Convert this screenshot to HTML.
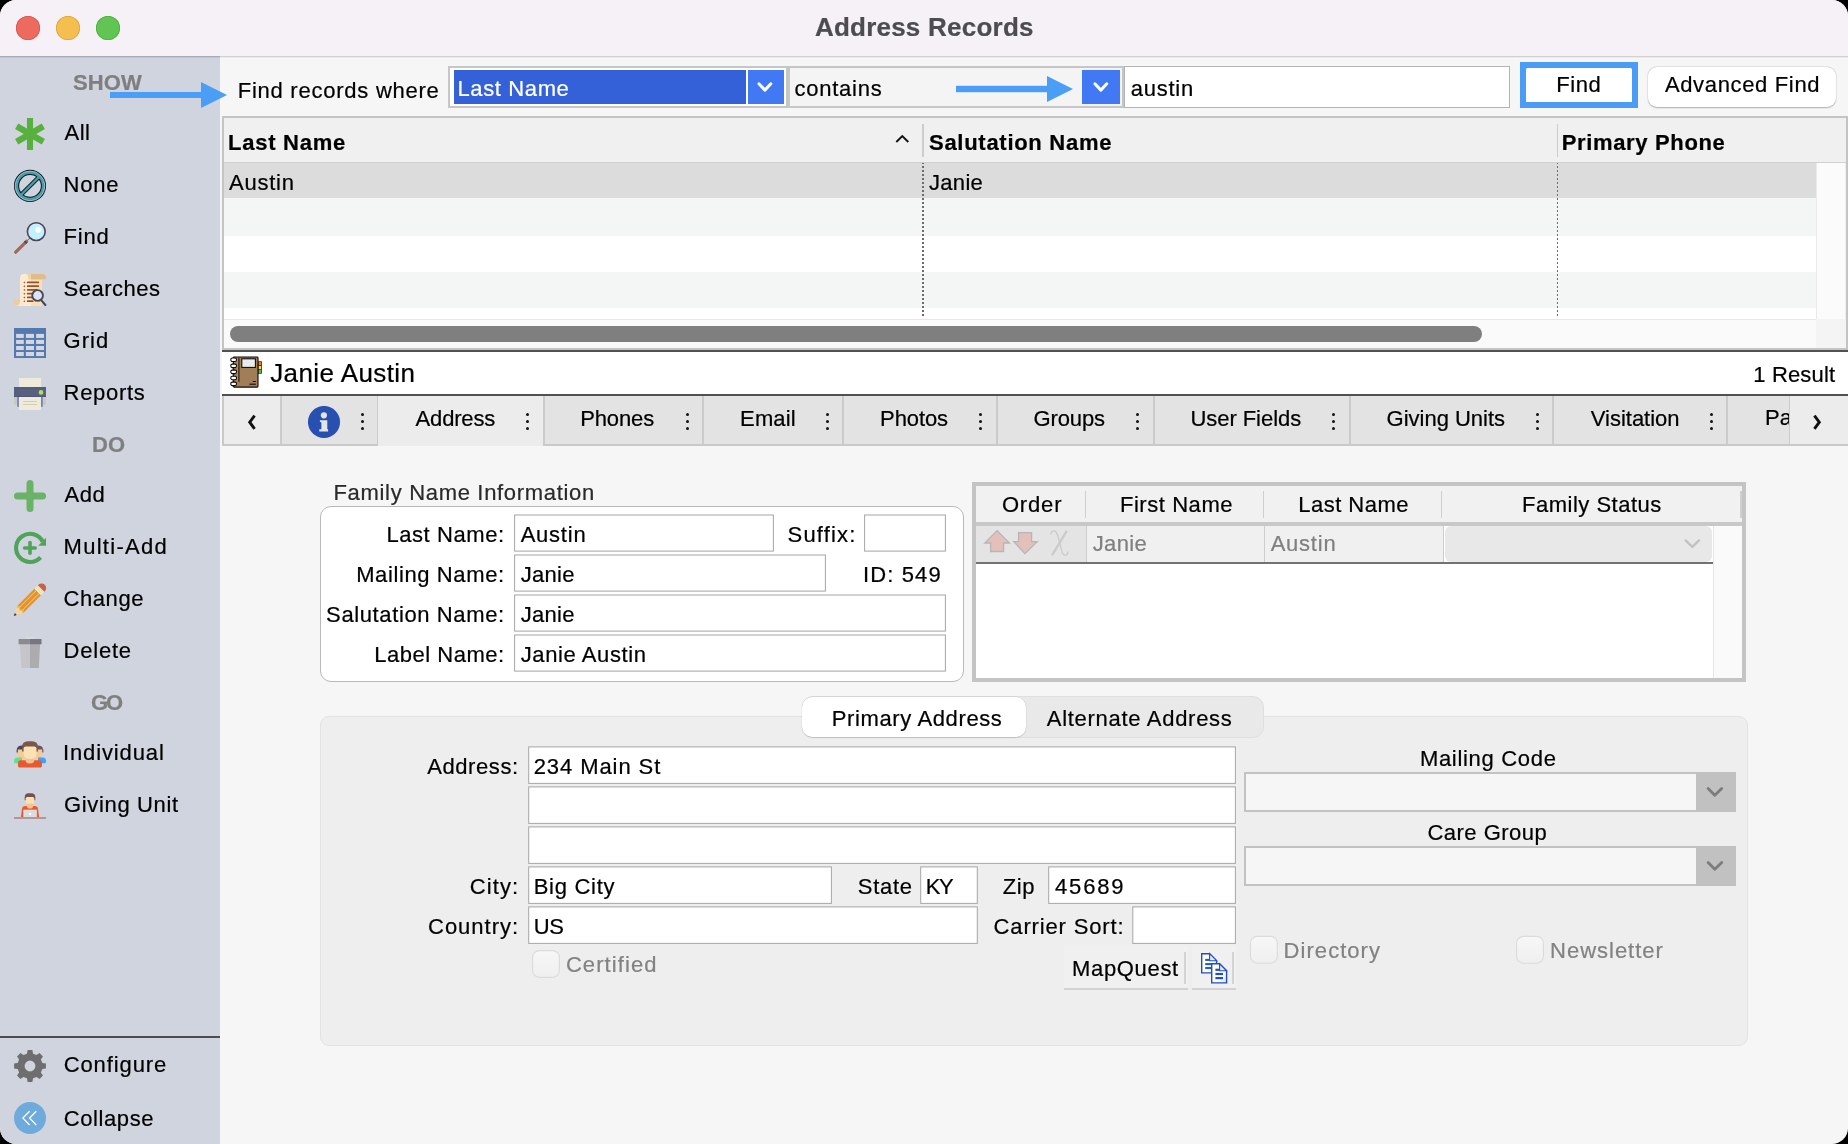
<!DOCTYPE html>
<html><head><meta charset="utf-8"><title>Address Records</title>
<style>
*{box-sizing:border-box;margin:0;padding:0}
html,body{width:1848px;height:1144px;overflow:hidden;background:#000;font-family:"Liberation Sans",sans-serif;color:#000}
#win{position:absolute;left:0;top:0;width:1848px;height:1144px;border-radius:16px;overflow:hidden;background:#f6f6f6}
.a{position:absolute}
.t{position:absolute;white-space:nowrap;line-height:1;font-family:"Liberation Sans",sans-serif;-webkit-text-stroke:.22px}
.tl{position:absolute;top:16px;width:24px;height:24px;border-radius:50%}
.ic{position:absolute;left:14px;width:32px;overflow:visible}
.in{position:absolute;background:#fff;border:1px solid #ababab}
.cb{position:absolute;width:27px;height:27px;border-radius:6.5px;background:linear-gradient(#f6f6f6,#efefef);border:1px solid #e0e0e0}
.vd{position:absolute;width:2px;background:#cbcbcb}
.dots{position:absolute;width:3px}
.dots i{position:absolute;left:0;width:3.2px;height:3.2px;background:#111;border-radius:50%}
</style></head><body>
<div id="win">
<div class="a" style="left:0px;top:0px;width:1848px;height:56px;background:#f6f0f7"></div>
<div class="a" style="left:0px;top:56px;width:220px;height:1px;background:#a6abb7"></div>
<div class="a" style="left:220px;top:56px;width:1628px;height:1px;background:#d1d1d1"></div>
<div class="tl" style="left:16px;background:#ed6a5e;box-shadow:inset 0 0 0 .8px #d5574c"></div>
<div class="tl" style="left:56px;background:#f5bf4f;box-shadow:inset 0 0 0 .8px #d9a63c"></div>
<div class="tl" style="left:96px;background:#61c554;box-shadow:inset 0 0 0 .8px #4eac41"></div>
<div class="a" style="left:0px;top:57px;width:220px;height:1087px;background:#d0d4de"></div>
<svg class="ic" style="top:118px;height:32px" viewBox="0 0 32 32"><g fill="#58b13e"><rect x="12.95" y="0" width="6.1" height="32"/><rect x="12.8" y="0.6" width="6.4" height="30.8" transform="rotate(60 16 16)"/><rect x="12.8" y="0.6" width="6.4" height="30.8" transform="rotate(120 16 16)"/></g></svg>
<svg class="ic" style="top:170px;height:32px" viewBox="0 0 32 32"><circle cx="16" cy="15.9" r="13.45" fill="none" stroke="#10181c" stroke-width="5.2"/><line x1="6.8" y1="25.1" x2="25.2" y2="6.7" stroke="#10181c" stroke-width="4.3"/><circle cx="16" cy="15.9" r="13.35" fill="none" stroke="#4a9aa9" stroke-width="3.0"/><circle cx="16" cy="15.9" r="14.85" fill="none" stroke="#b4eaee" stroke-width=".7"/><line x1="7" y1="24.9" x2="25" y2="6.9" stroke="#4a9aa9" stroke-width="2.3"/></svg>
<svg class="ic" style="top:222px;height:32px" viewBox="0 0 32 32"><line x1="12.8" y1="19.1" x2="16" y2="15.9" stroke="#6a6478" stroke-width="1"/><line x1="1.7" y1="30.2" x2="12.6" y2="19.3" stroke="#a2695a" stroke-width="3.3" stroke-linecap="round"/><line x1="11" y1="20.9" x2="12.3" y2="19.6" stroke="#4d4656" stroke-width="3.3"/><circle cx="22.27" cy="9.6" r="8.9" fill="#c4f0fb" stroke="#4a4458" stroke-width="1.6"/><circle cx="24.2" cy="7.85" r="2.9" fill="#fff" filter="url(#blr)"/><defs><filter id="blr" x="-50%" y="-50%" width="200%" height="200%"><feGaussianBlur stdDeviation=".45"/></filter></defs></svg>
<svg class="ic" style="top:274px;height:32px" viewBox="0 0 32 32"><path d="M6,4.4 Q6,0 10.4,0 L29,0 Q32,0.4 32,3.6 L32,5.6 L28,5.6 L28,32 L3.4,32 Q0,32 0,28.6 L0,25 L6,25Z" fill="#fcebd0"/><path d="M17,5.6 L28,5.6 L28,32 L17,32Z" fill="#fbdfb3"/><path d="M12.8,0 L29,0 Q32,0.4 32,3.6 L32,5.6 L14.4,5.6 Q14.6,2 12.8,0Z" fill="#f1d2a6"/><path d="M17,0 L29,0 Q32,0.4 32,3.6 L32,5.6 L17,5.6Z" fill="#dfbd8b"/><path d="M0,25 L6,25 L6,27.6 Q5.6,31.6 2.6,32 Q0,31.6 0,28.6Z" fill="#edcc9f"/><g stroke="#95502f" stroke-width="1.9" stroke-linecap="round"><line x1="13.8" y1="8.4" x2="24.199999999999996" y2="8.4"/><line x1="13.8" y1="12.15" x2="24.199999999999996" y2="12.15"/><line x1="13.8" y1="15.9" x2="22.599999999999998" y2="15.9"/><line x1="13.8" y1="19.65" x2="18.599999999999998" y2="19.65"/><line x1="13.8" y1="23.4" x2="17.599999999999998" y2="23.4"/><line x1="13.8" y1="27.15" x2="18.599999999999998" y2="27.15"/></g><g fill="#a15a36"><path d="M9.35,8.4 L10.35,7.4 L11.35,8.4 L10.35,9.4Z"/><path d="M9.35,12.15 L10.35,11.15 L11.35,12.15 L10.35,13.15Z"/><path d="M9.35,15.9 L10.35,14.9 L11.35,15.9 L10.35,16.9Z"/><path d="M9.35,19.65 L10.35,18.65 L11.35,19.65 L10.35,20.65Z"/><path d="M9.35,23.4 L10.35,22.4 L11.35,23.4 L10.35,24.4Z"/><path d="M9.35,27.15 L10.35,26.15 L11.35,27.15 L10.35,28.15Z"/></g><line x1="27.6" y1="26.6" x2="31.4" y2="31" stroke="#454a56" stroke-width="2.1" stroke-linecap="round"/><circle cx="23.6" cy="21.5" r="5.35" fill="#dfe4f4" stroke="#454a56" stroke-width="1.9"/></svg>
<svg class="ic" style="top:328px;height:30px" viewBox="0 0 32 30"><rect x="0" y="0" width="32" height="30" fill="#5479ae"/><rect x="2.1" y="5.9" width="7.7" height="4.05" fill="#d3d7e0"/><rect x="11.9" y="5.9" width="8.1" height="4.05" fill="#d3d7e0"/><rect x="22.1" y="5.9" width="7.9" height="4.05" fill="#d3d7e0"/><rect x="2.1" y="11.9" width="7.7" height="4.05" fill="#d3d7e0"/><rect x="11.9" y="11.9" width="8.1" height="4.05" fill="#d3d7e0"/><rect x="22.1" y="11.9" width="7.9" height="4.05" fill="#d3d7e0"/><rect x="2.1" y="18" width="7.7" height="4.05" fill="#d3d7e0"/><rect x="11.9" y="18" width="8.1" height="4.05" fill="#d3d7e0"/><rect x="22.1" y="18" width="7.9" height="4.05" fill="#d3d7e0"/><rect x="2.1" y="24" width="7.7" height="4.05" fill="#d3d7e0"/><rect x="11.9" y="24" width="8.1" height="4.05" fill="#d3d7e0"/><rect x="22.1" y="24" width="7.9" height="4.05" fill="#d3d7e0"/></svg>
<svg class="ic" style="top:378px;height:32px" viewBox="0 0 32 32"><rect x="4.9" y="0" width="22.1" height="10" fill="#eeebdc"/><rect x="0" y="17" width="3.6" height="9.6" fill="#c9c9c4"/><rect x="28.4" y="17" width="3.6" height="9.6" fill="#c9c9c4"/><rect x="3.2" y="17" width="1.8" height="12" rx=".8" fill="#7480bc"/><rect x="27" y="17" width="1.8" height="12" rx=".8" fill="#7480bc"/><rect x="4.9" y="17" width="22.1" height="15" fill="#eeebdc"/><rect x="0" y="9.2" width="32" height="9.8" fill="#57607f"/><rect x="0" y="9.2" width="32" height="1" fill="#4f5678"/><rect x="0" y="18" width="32" height="1" fill="#4f5678"/><circle cx="27" cy="14.4" r="2.3" fill="#a4e266"/><rect x="9" y="23" width="14" height="1" fill="#d3cfae"/><rect x="9" y="26" width="14" height="1" fill="#d3cfae"/></svg>
<svg class="ic" style="top:480px;height:32px" viewBox="0 0 32 32"><g stroke="#6ab265" stroke-width="7" stroke-linecap="round"><line x1="3.5" y1="16" x2="28.5" y2="16"/><line x1="16" y1="3.5" x2="16" y2="28.5"/></g></svg>
<svg class="ic" style="top:532px;height:32px" viewBox="0 0 32 32"><path d="M26.54,25.30 A14.05,14.05 0 1 1 28.62,9.52" fill="none" stroke="#4fa35a" stroke-width="4.1"/><path d="M24.2,13.7 L32.1,13.8 L31.9,5.8Z" fill="#4fa35a"/><g stroke="#4fa35a" stroke-width="3.6" stroke-linecap="round"><line x1="10.6" y1="16" x2="21.2" y2="16"/><line x1="16" y1="10.6" x2="16" y2="21.2"/></g></svg>
<svg class="ic" style="top:584px;height:32px" viewBox="0 0 32 32"><g transform="rotate(-45 16 16)">
<path d="M-6.7,15.8 L2.6,11.2 L2.6,20.4Z" fill="#f8d3a4"/>
<path d="M-6.7,15.8 L-3.9,14.4 L-3.9,17.2Z" fill="#2f3440"/>
<rect x="2.4" y="11.2" width="25" height="9.2" fill="#e88f2e"/>
<rect x="2.4" y="13.3" width="25" height="1.1" fill="#ebcb55"/>
<rect x="2.4" y="17.2" width="25" height="1.1" fill="#ebcb55"/>
<rect x="2.4" y="14.4" width="25" height="2.8" fill="#e2913a"/>
<path d="M1.2,11.9 L2.6,11.2 L4.6,13.3 L2.4,15.8 L4.6,18.3 L2.6,20.4 L1.2,19.7 L2.6,17.6 L1,15.8 L2.6,14Z" fill="#e9c24a"/>
<rect x="27.2" y="11.2" width="4.7" height="9.2" fill="#f7f0bd"/>
<rect x="28.5" y="11.2" width="0.8" height="9.2" fill="#d8d6c6"/><rect x="30.3" y="11.2" width="0.8" height="9.2" fill="#d8d6c6"/>
<path d="M31.9,11.2 L32.6,11.2 A4.6,4.6 0 0 1 32.6,20.4 L31.9,20.4Z" fill="#c9604e"/></g></svg>
<svg class="ic" style="top:638px;height:32px" viewBox="0 0 32 32"><rect x="11.7" y="-1.4" width="8.8" height="2.6" rx="1" fill="#d9d9dc" opacity=".8"/><path d="M5.9,6 L15.9,6 L15.9,29.9 L7.3,29.9Z" fill="#c6c5ca"/><path d="M15.9,6 L26.1,6 L24.8,29.9 L15.9,29.9Z" fill="#acabb0"/><path d="M4.6,1.6 Q4.6,1 5.2,1 L15.9,1 L15.9,6.3 L5.2,6.3 Q4.6,6.3 4.6,5.7Z" fill="#8b8a90"/><path d="M15.9,1 L26.9,1 Q27.5,1 27.5,1.6 L27.5,5.7 Q27.5,6.3 26.9,6.3 L15.9,6.3Z" fill="#77757f"/></svg>
<svg class="ic" style="top:740.6px;height:32px" viewBox="0 0 32 32"><g>
<path d="M2.6,11.6 Q2.2,4.4 7.2,4.4 L11,4.4 L11,11.6Z" fill="#474565"/>
<path d="M3.8,8.4 L10.6,8.4 L10.6,18.4 L7,18.4 Q3.8,17.4 3.8,13Z" fill="#f5cb94"/>
<path d="M0,20.4 Q0,16.4 3.4,16.4 L8,16.4 L8,22.2 L1.4,22.2 Q0,22.2 0,20.8Z" fill="#62df90"/>
<path d="M29.4,11.6 Q29.8,4.4 24.8,4.4 L21,4.4 L21,11.6Z" fill="#6e5560"/>
<path d="M28.2,8.4 L21.4,8.4 L21.4,18.4 L25,18.4 Q28.2,17.4 28.2,13Z" fill="#f5cb94"/>
<path d="M32.1,20.4 Q32.1,16.4 28.7,16.4 L24,16.4 L24,22.2 L30.7,22.2 Q32.1,22.2 32.1,20.8Z" fill="#44a0f5"/>
<path d="M4,25 L4,22 Q4,19.3 7,19.3 L25,19.3 Q28,19.3 28,22 L28,25 Q28,26.4 26.6,26.4 L5.4,26.4 Q4,26.4 4,25Z" fill="#e9592f"/>
<path d="M11.5,16 L20.3,16 L20.3,19 Q20.3,22.5 15.9,22.5 Q11.5,22.5 11.5,19Z" fill="#f5c08c"/>
<path d="M8,10.4 L8,6.6 Q8,0.2 14,0.2 L18,0.2 Q24,0.2 24,6.6 L24,10.4Z" fill="#7a574b"/>
<path d="M9.6,7.6 Q9.6,5.4 12,5.4 L20,5.4 Q22.5,5.4 22.5,7.6 L22.5,12.4 Q22.5,18 16,18 Q9.6,18 9.6,12.4Z" fill="#fbe2b4"/>
</g></svg>
<svg class="ic" style="top:793px;height:32px" viewBox="0 0 32 32"><path d="M10.7,7.2 L10.7,4.2 Q10.7,0.2 14.6,0.2 L17.4,0.2 Q21.3,0.2 21.3,4.2 L21.3,7.2Z" fill="#76504a"/>
<path d="M11.7,5.6 Q11.7,4.1 13.4,4.1 L18.6,4.1 Q20.3,4.1 20.3,5.6 L20.3,8 Q20.3,11.9 16,11.9 Q11.7,11.9 11.7,8Z" fill="#fbe2b4"/>
<path d="M6.9,24.2 L8,15.8 Q8.3,12.9 11.2,12.9 L20.8,12.9 Q23.7,12.9 24,15.8 L25.2,24.2Z" fill="#ea5a2c"/>
<path d="M13,10.6 L19,10.6 L19,13 Q19,15.6 16,15.6 Q13,15.6 13,13Z" fill="#f6c58f"/>
<rect x="9.8" y="17.1" width="12.5" height="7.2" fill="#d9dce2" stroke="#e3ebf3" stroke-width=".7"/>
<rect x="15" y="20" width="2.1" height="2" rx=".4" fill="#fff"/>
<rect x="0" y="24.1" width="32.1" height="1.75" fill="#b08d8a"/></svg>
<svg class="ic" style="top:1050px;height:32px" viewBox="0 0 32 32"><path fill-rule="evenodd" fill="#6e6e6e" d="M12.94,3.67 L13.61,0.08 L18.39,0.08 L19.06,3.67 L22.55,5.12 L25.57,3.05 L28.95,6.43 L26.88,9.45 L28.33,12.94 L31.92,13.61 L31.92,18.39 L28.33,19.06 L26.88,22.55 L28.95,25.57 L25.57,28.95 L22.55,26.88 L19.06,28.33 L18.39,31.92 L13.61,31.92 L12.94,28.33 L9.45,26.88 L6.43,28.95 L3.05,25.57 L5.12,22.55 L3.67,19.06 L0.08,18.39 L0.08,13.61 L3.67,12.94 L5.12,9.45 L3.05,6.43 L6.43,3.05 L9.45,5.12Z M10.6,16 a5.4,5.4 0 1,0 10.8,0 a5.4,5.4 0 1,0 -10.8,0Z"/></svg>
<svg class="ic" style="top:1102px;height:32px" viewBox="0 0 32 32"><circle cx="16" cy="16" r="16" fill="#6eaadc"/><g fill="none" stroke="#fff" stroke-width="1.3"><polyline points="22.3,9.2 15.6,16.1 22.3,23"/><polyline points="15.6,9.2 8.9,16.1 15.6,23"/></g></svg>
<div class="a" style="left:0px;top:1036px;width:220px;height:2px;background:#4c4c4e"></div>
<div class="a" style="left:220px;top:57px;width:1628px;height:1px;background:#ebebeb"></div>
<div class="a" style="left:0px;top:57px;width:220px;height:1px;background:#bfc4cf"></div>
<div class="a" style="left:448px;top:66px;width:676px;height:42px;background:#fff;border:2px solid #c6c6c6"></div>
<div class="a" style="left:454px;top:70px;width:292px;height:34px;background:#3461d8"></div>
<div class="a" style="left:748px;top:70px;width:36px;height:34px;background:#4079f3"></div>
<svg class="a" style="left:748px;top:70px" width="36" height="34"><polyline points="10.95,13.8 16.9,20.1 22.85,13.8" fill="none" stroke="#fff" stroke-width="3" stroke-linecap="round" stroke-linejoin="round"/></svg>
<div class="a" style="left:786px;top:68px;width:336px;height:38px;background:#f4f4f4"></div>
<div class="a" style="left:786.2px;top:68px;width:3.7px;height:38px;background:#c6c6c6"></div>
<div class="a" style="left:1082px;top:70px;width:38px;height:34px;background:#4079f3"></div>
<svg class="a" style="left:1082px;top:70px" width="38" height="34"><polyline points="12.9,13.8 18.85,20.1 24.8,13.8" fill="none" stroke="#fff" stroke-width="3" stroke-linecap="round" stroke-linejoin="round"/></svg>
<div class="a" style="left:1124px;top:66px;width:386px;height:42px;background:#fff;border:1.5px solid #b4b4b4"></div>
<div class="a" style="left:1520px;top:62px;width:118px;height:46px;background:#4a9cf5"></div>
<div class="a" style="left:1526px;top:68px;width:106px;height:34px;background:#fff;border-radius:1.5px 1.5px 0 0"></div>
<div class="a" style="left:1648px;top:67px;width:188px;height:40px;background:#fff;border-radius:9px;box-shadow:0 0.5px 1.5px rgba(0,0,0,.28),0 0 0 .5px rgba(0,0,0,.06)"></div>
<svg class="a" style="left:0;top:57px" width="1848" height="70"><g fill="#4a9ef5"><rect x="110" y="35" width="92" height="6"/><polygon points="201,25 227,38 201,51"/><rect x="956" y="28.8" width="92" height="6.4"/><polygon points="1047,19 1073,32 1047,45"/></g></svg>
<div class="a" style="left:222px;top:116px;width:1626px;height:233.5px;background:#fff;border:2px solid #c4c4c4"></div>
<div class="a" style="left:224px;top:118px;width:1622px;height:44.5px;background:#f0f0f0"></div>
<div class="a" style="left:224px;top:162px;width:1622px;height:1px;background:#d0d0d0"></div>
<div class="a" style="left:224px;top:162.5px;width:1592px;height:35.5px;background:#dcdcdc"></div>
<div class="a" style="left:224px;top:198px;width:1592px;height:38px;background:#f4f5f5"></div>
<div class="a" style="left:224px;top:236px;width:1592px;height:36px;background:#fff"></div>
<div class="a" style="left:224px;top:272px;width:1592px;height:36px;background:#f4f5f5"></div>
<div class="a" style="left:224px;top:308px;width:1592px;height:10.5px;background:#fff"></div>
<div class="a" style="left:1816px;top:163px;width:30px;height:184.5px;background:#fbfbfb;border-left:1px solid #e9e9e9;border-right:1px solid #f0f0f0"></div>
<div class="a" style="left:224px;top:318.5px;width:1592px;height:29px;background:#fafafa;border-top:1px solid #e8e8e8"></div>
<div class="a" style="left:1816px;top:318.5px;width:30px;height:29px;background:#f4f4f4"></div>
<div class="a" style="left:229.5px;top:325.5px;width:1252.5px;height:16.5px;background:#7f7f7f;border-radius:8.5px"></div>
<div class="a" style="left:922.4px;top:124px;width:1.6px;height:33px;background:#cdcdcd"></div>
<div class="a" style="left:1556.6px;top:124px;width:1.6px;height:33px;background:#cdcdcd"></div>
<svg class="a" style="left:890px;top:130px" width="24" height="18"><polyline points="6.3,12 12.3,6 18.3,12" fill="none" stroke="#111" stroke-width="1.9"/></svg>
<div class="a" style="left:922.3px;top:163px;width:1.7px;height:153px;background:repeating-linear-gradient(#6c6c6c 0,#6c6c6c .7px,transparent .7px,transparent 2.7px,#6c6c6c 2.7px,#6c6c6c 4px)"></div>
<div class="a" style="left:1556.5px;top:163px;width:1.7px;height:153px;background:repeating-linear-gradient(#6c6c6c 0,#6c6c6c .7px,transparent .7px,transparent 2.7px,#6c6c6c 2.7px,#6c6c6c 4px)"></div>
<div class="a" style="left:222px;top:350px;width:1626px;height:2px;background:#515151"></div>
<div class="a" style="left:222px;top:352px;width:1626px;height:42px;background:#fff"></div>
<div class="a" style="left:222px;top:394px;width:1626px;height:2px;background:#515151"></div>
<svg class="a" style="left:230px;top:356px;overflow:visible" width="32" height="32" viewBox="0 0 32 32">
<rect x="28" y="5.3" width="3.8" height="12.4" fill="#1a140e"/>
<rect x="28.4" y="5.9" width="2.7" height="3.3" fill="#f07830"/><rect x="28.4" y="9.9" width="2.7" height="3.3" fill="#f8d850"/><rect x="28.4" y="13.9" width="2.7" height="3.2" fill="#58b860"/>
<rect x="3.3" y="1" width="24.7" height="30.1" rx="0.8" fill="#a17e57" stroke="#0c0a08" stroke-width="1.1"/>
<rect x="7" y="1.8" width="1.2" height="24" fill="#b08c60"/>
<rect x="8.2" y="1.6" width="1.4" height="24.2" fill="#3a2a18"/>
<rect x="11.8" y="2.8" width="13.6" height="8.6" fill="#e8ecef" stroke="#0c0a08" stroke-width="1.05"/>
<rect x="22.8" y="25" width="3.1" height="1" fill="#0c0a08"/><rect x="19.4" y="27.6" width="6.5" height="1.2" fill="#1a140e"/>
<rect x="0.8" y="2.05" width="5.7" height="3.5" rx="1.5" fill="#fff" stroke="#0c0a08" stroke-width="1.05"/><rect x="0.8" y="8.1" width="5.7" height="3.5" rx="1.5" fill="#fff" stroke="#0c0a08" stroke-width="1.05"/><rect x="0.8" y="14.1" width="5.7" height="3.5" rx="1.5" fill="#fff" stroke="#0c0a08" stroke-width="1.05"/><rect x="0.8" y="20.15" width="5.7" height="3.5" rx="1.5" fill="#fff" stroke="#0c0a08" stroke-width="1.05"/><rect x="0.8" y="26.1" width="5.7" height="3.5" rx="1.5" fill="#fff" stroke="#0c0a08" stroke-width="1.05"/></svg>
<div class="a" style="left:222px;top:396px;width:1626px;height:48.5px;background:#e3e3e3"></div>
<div class="a" style="left:222px;top:444.2px;width:1626px;height:1.8px;background:#c9c9c9"></div>
<div class="a" style="left:222px;top:396px;width:2px;height:48.5px;background:#c9c9c9"></div>
<div class="a" style="left:224px;top:396px;width:57px;height:48.2px;background:#ececec"></div>
<div class="a" style="left:1790px;top:396px;width:58px;height:48.2px;background:#ececec"></div>
<div class="a" style="left:378.4px;top:396px;width:165px;height:50px;background:#ececec"></div>
<div class="a" style="left:280.2px;top:396px;width:1.8px;height:48.2px;background:#cbcbcb"></div>
<div class="a" style="left:376.7px;top:396px;width:1.8px;height:48.2px;background:#cbcbcb"></div>
<div class="a" style="left:543.2px;top:396px;width:1.8px;height:48.2px;background:#cbcbcb"></div>
<div class="a" style="left:702px;top:396px;width:1.8px;height:48.2px;background:#cbcbcb"></div>
<div class="a" style="left:842.2px;top:396px;width:1.8px;height:48.2px;background:#cbcbcb"></div>
<div class="a" style="left:996.2px;top:396px;width:1.8px;height:48.2px;background:#cbcbcb"></div>
<div class="a" style="left:1153.2px;top:396px;width:1.8px;height:48.2px;background:#cbcbcb"></div>
<div class="a" style="left:1349.2px;top:396px;width:1.8px;height:48.2px;background:#cbcbcb"></div>
<div class="a" style="left:1552.2px;top:396px;width:1.8px;height:48.2px;background:#cbcbcb"></div>
<div class="a" style="left:1726.4px;top:396px;width:1.8px;height:48.2px;background:#cbcbcb"></div>
<div class="a" style="left:1788.6px;top:396px;width:1.8px;height:48.2px;background:#cbcbcb"></div>
<div class="dots" style="left:360.5px;top:0"><i style="top:412.5px"></i><i style="top:419.8px"></i><i style="top:427px"></i></div>
<div class="dots" style="left:526.3000000000001px;top:0"><i style="top:412.5px"></i><i style="top:419.8px"></i><i style="top:427px"></i></div>
<div class="dots" style="left:685.5px;top:0"><i style="top:412.5px"></i><i style="top:419.8px"></i><i style="top:427px"></i></div>
<div class="dots" style="left:825.8000000000001px;top:0"><i style="top:412.5px"></i><i style="top:419.8px"></i><i style="top:427px"></i></div>
<div class="dots" style="left:978.9000000000001px;top:0"><i style="top:412.5px"></i><i style="top:419.8px"></i><i style="top:427px"></i></div>
<div class="dots" style="left:1135.8px;top:0"><i style="top:412.5px"></i><i style="top:419.8px"></i><i style="top:427px"></i></div>
<div class="dots" style="left:1332.3px;top:0"><i style="top:412.5px"></i><i style="top:419.8px"></i><i style="top:427px"></i></div>
<div class="dots" style="left:1536.1000000000001px;top:0"><i style="top:412.5px"></i><i style="top:419.8px"></i><i style="top:427px"></i></div>
<div class="dots" style="left:1709.9px;top:0"><i style="top:412.5px"></i><i style="top:419.8px"></i><i style="top:427px"></i></div>
<svg class="a" style="left:240px;top:408px" width="24" height="28"><polyline points="14.6,7.6 9.7,14.2 14.6,20.8" fill="none" stroke="#111" stroke-width="2.9"/></svg>
<svg class="a" style="left:1806px;top:408px" width="24" height="28"><polyline points="8.4,7.6 13.3,14.2 8.4,20.8" fill="none" stroke="#111" stroke-width="2.9"/></svg>
<svg class="a" style="left:308px;top:405.8px" width="33" height="33" viewBox="0 0 33 33"><circle cx="16" cy="16" r="16.05" fill="#2850b0"/>
<circle cx="15.9" cy="9.3" r="3.1" fill="#e5e5e5"/><path d="M11.9,14.2 L19.3,14.2 L19.3,23.2 L20.1,23.3 L20.1,25.4 L11.3,25.4 L11.3,23.3 L13.4,23.2 L13.4,16.3 L11.9,16Z" fill="#e5e5e5"/></svg>
<div class="a" style="left:1730px;top:398px;width:59px;height:44px;overflow:hidden;will-change:transform"><div class="t" style="left:35px;top:9.4px;font-size:22px">Pastoral</div></div>
<div class="a" style="left:320px;top:506px;width:643.5px;height:176px;background:#fff;border:1px solid #b9b9b9;border-radius:11px"></div>





<div class="a" style="left:972px;top:482.4px;width:774px;height:199.4px;background:#fff;border:4px solid #c4c4c4"></div>
<div class="a" style="left:976px;top:486.3px;width:766px;height:36px;background:#f1f1f1"></div>
<div class="a" style="left:976px;top:522.3px;width:766px;height:3.7px;background:#c8c8c8"></div>
<div class="a" style="left:976px;top:526px;width:110px;height:36px;background:#e4e4e4"></div>
<div class="a" style="left:1086px;top:526px;width:358px;height:36px;background:#f0f0f0"></div>
<div class="a" style="left:1444.5px;top:526px;width:267.5px;height:36px;background:#e8e8e8;border-radius:6px"></div>
<div class="a" style="left:976px;top:562px;width:736.5px;height:2.2px;background:#727272"></div>
<div class="a" style="left:1712.5px;top:526px;width:29.3px;height:152.4px;background:#fafafa;border-left:1px solid #e6e6e6"></div>
<div class="a" style="left:1084.5px;top:490.5px;width:1.6px;height:27.5px;background:#cfcfcf"></div>
<div class="a" style="left:1262.6px;top:490.5px;width:1.6px;height:27.5px;background:#cfcfcf"></div>
<div class="a" style="left:1440.6px;top:490.5px;width:1.6px;height:27.5px;background:#cfcfcf"></div>
<div class="a" style="left:1740px;top:490.5px;width:1.6px;height:27.5px;background:#cfcfcf"></div>
<div class="a" style="left:1085.8px;top:526px;width:1.2px;height:35.6px;background:#cdcdcd"></div>
<div class="a" style="left:1264px;top:526px;width:1.2px;height:35.6px;background:#cdcdcd"></div>
<div class="a" style="left:1443px;top:526px;width:1.2px;height:35.6px;background:#cdcdcd"></div>
<svg class="a" style="left:1680px;top:534px" width="26" height="20"><polyline points="5.6,6.4 12.3,12.8 19,6.4" fill="none" stroke="#c2c2c2" stroke-width="2.4" stroke-linecap="round" stroke-linejoin="round"/></svg>
<svg class="a" style="left:980px;top:526px" width="100" height="38" viewBox="0 0 100 38">
<path d="M17.1,4.6 L29.4,17 L23.6,17 L23.6,25.5 L10.6,25.5 L10.6,17 L4.8,17Z" fill="#e3c0ba" stroke="#b6b6b6" stroke-width="1.3"/>
<path d="M44.9,27.6 L33.8,15.6 L38.6,15.6 L38.6,6.6 L51.6,6.6 L51.6,15.6 L57.2,15.6Z" fill="#e3c0ba" stroke="#b6b6b6" stroke-width="1.3"/>
<path d="M86.8,4.8 L72,29.4" fill="none" stroke="#cbcbcb" stroke-width="2.3"/>
<path d="M70.6,8.4 Q71.4,4.6 74.6,5 Q76.8,5.6 78.4,12 L81.6,24.4 Q83,29.6 85.4,29.2 Q87.8,28.8 88,25.6" fill="none" stroke="#cbcbcb" stroke-width="1.3"/>
</svg>
<div class="a" style="left:320px;top:716px;width:1428px;height:330px;background:#eeeeee;border:1px solid #e3e3e3;border-radius:9px"></div>
<div class="a" style="left:801.5px;top:696px;width:462px;height:42px;background:#e9e9e9;border:1px solid #dfdfdf;border-radius:11px"></div>
<div class="a" style="left:802.3px;top:696.6px;width:223.5px;height:40.8px;background:#fff;border-radius:10.5px;box-shadow:0 .5px 1.2px rgba(0,0,0,.13),0 0 0 .5px rgba(0,0,0,.05)"></div>








<div class="a" style="left:1064px;top:946px;width:124px;height:44px;background:#f0f0f0;border-bottom:2px solid #d2d2d2"></div>
<div class="a" style="left:1184.2px;top:952.2px;width:1.8px;height:31.6px;background:#d3d3d3"></div>
<div class="a" style="left:1192px;top:946px;width:44px;height:44px;background:#f0f0f0;border-bottom:2px solid #d2d2d2"></div>
<div class="a" style="left:1232.2px;top:952.2px;width:1.8px;height:31.6px;background:#d3d3d3"></div>
<svg class="a" style="left:1200.5px;top:952.6px;overflow:visible" width="27" height="31" viewBox="0 0 27 31"><defs><linearGradient id="cpg" x1="0" y1="0" x2="1" y2="1"><stop offset="0" stop-color="#fff"/><stop offset=".6" stop-color="#fff"/><stop offset="1" stop-color="#d6e2f8"/></linearGradient></defs><path d="M0.7,0.7 L8.6,0.7 L15.6,7.7 L15.6,19.9 L0.7,19.9Z" fill="url(#cpg)" stroke="#2250b8" stroke-width="1.4" stroke-linejoin="miter"/><path d="M8.6,0.7 L8.6,7.7 L15.6,7.7Z" fill="#e4ecfb" stroke="#2250b8" stroke-width="1.1"/><rect x="4.2" y="5.8500000000000005" width="4.4" height="2.1" fill="#2a5cc6"/><rect x="4.2" y="10.049999999999999" width="9" height="2.1" fill="#2a5cc6"/><rect x="4.2" y="13.95" width="9" height="2.1" fill="#2a5cc6"/><path d="M10.7,10.8 L18.6,10.8 L25.6,17.8 L25.6,29.900000000000002 L10.7,29.900000000000002Z" fill="url(#cpg)" stroke="#2250b8" stroke-width="1.4" stroke-linejoin="miter"/><path d="M18.6,10.8 L18.6,17.8 L25.6,17.8Z" fill="#e4ecfb" stroke="#2250b8" stroke-width="1.1"/><rect x="14.4" y="15.700000000000001" width="4.2" height="2.2" fill="#2450b4"/><rect x="14.4" y="19.9" width="7.6" height="2.2" fill="#2450b4"/><rect x="14.4" y="24.0" width="7.6" height="2.2" fill="#2450b4"/></svg>
<div class="a" style="left:1244px;top:772px;width:492px;height:40px;background:#f6f6f6;border:2px solid #c2c2c2"></div>
<div class="a" style="left:1696px;top:772px;width:40px;height:40px;background:#c1c1c1"></div>
<svg class="a" style="left:1696px;top:772px" width="40" height="40"><polyline points="12.1,16.5 18.8,23.3 25.7,16.5" fill="none" stroke="#7c7c7c" stroke-width="2.8" stroke-linecap="round" stroke-linejoin="round"/></svg>
<div class="a" style="left:1244px;top:846.2px;width:492px;height:40px;background:#f6f6f6;border:2px solid #c2c2c2"></div>
<div class="a" style="left:1696px;top:846.2px;width:40px;height:40px;background:#c1c1c1"></div>
<svg class="a" style="left:1696px;top:846.2px" width="40" height="40"><polyline points="12.1,16.5 18.8,23.3 25.7,16.5" fill="none" stroke="#7c7c7c" stroke-width="2.8" stroke-linecap="round" stroke-linejoin="round"/></svg>
<svg class="a" style="left:0;top:0" width="1848" height="1144"><defs><linearGradient id="cbg" x1="0" y1="0" x2="0" y2="1"><stop offset="0" stop-color="#f7f7f7"/><stop offset="1" stop-color="#efefef"/></linearGradient></defs><rect x="532.6" y="950.6" width="26.8" height="26.8" rx="6.8" fill="url(#cbg)" stroke="#dbdbdb" stroke-width="1.1"/><rect x="1250.5" y="936.4" width="26.8" height="26.8" rx="6.8" fill="url(#cbg)" stroke="#dbdbdb" stroke-width="1.1"/><rect x="1516.6" y="936.4" width="26.8" height="26.8" rx="6.8" fill="url(#cbg)" stroke="#dbdbdb" stroke-width="1.1"/><rect x="514.60" y="515.00" width="258.80" height="36.10" fill="#fff" stroke="#a9a9a9" stroke-width="1.05"/><rect x="864.60" y="515.00" width="80.80" height="36.10" fill="#fff" stroke="#a9a9a9" stroke-width="1.05"/><rect x="514.60" y="555.00" width="310.80" height="36.10" fill="#fff" stroke="#a9a9a9" stroke-width="1.05"/><rect x="514.60" y="595.00" width="430.80" height="36.10" fill="#fff" stroke="#a9a9a9" stroke-width="1.05"/><rect x="514.60" y="635.00" width="430.80" height="36.10" fill="#fff" stroke="#a9a9a9" stroke-width="1.05"/><rect x="528.70" y="746.90" width="706.70" height="36.50" fill="#fff" stroke="#a9a9a9" stroke-width="1.05"/><rect x="528.70" y="786.90" width="706.70" height="36.50" fill="#fff" stroke="#a9a9a9" stroke-width="1.05"/><rect x="528.70" y="826.90" width="706.70" height="36.50" fill="#fff" stroke="#a9a9a9" stroke-width="1.05"/><rect x="528.70" y="866.90" width="302.70" height="36.50" fill="#fff" stroke="#a9a9a9" stroke-width="1.05"/><rect x="920.70" y="866.90" width="56.60" height="36.50" fill="#fff" stroke="#a9a9a9" stroke-width="1.05"/><rect x="1048.70" y="866.90" width="186.70" height="36.50" fill="#fff" stroke="#a9a9a9" stroke-width="1.05"/><rect x="528.70" y="906.90" width="448.60" height="36.50" fill="#fff" stroke="#a9a9a9" stroke-width="1.05"/><rect x="1132.80" y="906.90" width="102.60" height="36.50" fill="#fff" stroke="#a9a9a9" stroke-width="1.05"/></svg>
<div id="tx" style="position:absolute;left:0;top:0;width:1848px;height:1144px;will-change:transform">
<div class="t" style="left:814.90px;top:13.80px;font-size:26px;letter-spacing:0.233px;color:#4d4c50;font-weight:bold;">Address Records</div>
<div class="t" style="left:73.00px;top:72.00px;font-size:22px;letter-spacing:0.109px;color:#7f7f7f;font-weight:bold;">SHOW</div>
<div class="t" style="left:92.00px;top:434.00px;font-size:22px;letter-spacing:0.112px;color:#7f7f7f;font-weight:bold;">DO</div>
<div class="t" style="left:91.00px;top:692.00px;font-size:22px;letter-spacing:-2.112px;color:#7f7f7f;font-weight:bold;">GO</div>
<div class="t" style="left:64.60px;top:122.00px;font-size:22px;letter-spacing:0.419px;color:#000;">All</div>
<div class="t" style="left:63.60px;top:174.00px;font-size:22px;letter-spacing:0.781px;color:#000;">None</div>
<div class="t" style="left:63.60px;top:226.00px;font-size:22px;letter-spacing:0.746px;color:#000;">Find</div>
<div class="t" style="left:63.60px;top:278.00px;font-size:22px;letter-spacing:0.494px;color:#000;">Searches</div>
<div class="t" style="left:63.60px;top:330.00px;font-size:22px;letter-spacing:1.025px;color:#000;">Grid</div>
<div class="t" style="left:63.60px;top:382.00px;font-size:22px;letter-spacing:0.695px;color:#000;">Reports</div>
<div class="t" style="left:64.60px;top:484.00px;font-size:22px;letter-spacing:0.495px;color:#000;">Add</div>
<div class="t" style="left:63.60px;top:536.00px;font-size:22px;letter-spacing:1.277px;color:#000;">Multi-Add</div>
<div class="t" style="left:63.60px;top:588.00px;font-size:22px;letter-spacing:0.554px;color:#000;">Change</div>
<div class="t" style="left:63.60px;top:640.00px;font-size:22px;letter-spacing:0.768px;color:#000;">Delete</div>
<div class="t" style="left:63.00px;top:742.00px;font-size:22px;letter-spacing:0.871px;color:#000;">Individual</div>
<div class="t" style="left:64.00px;top:794.00px;font-size:22px;letter-spacing:0.652px;color:#000;">Giving Unit</div>
<div class="t" style="left:63.70px;top:1054.00px;font-size:22px;letter-spacing:0.893px;color:#000;">Configure</div>
<div class="t" style="left:63.70px;top:1107.50px;font-size:22px;letter-spacing:0.604px;color:#000;">Collapse</div>
<div class="t" style="left:237.70px;top:80.00px;font-size:22px;letter-spacing:0.755px;color:#000;">Find records where</div>
<div class="t" style="left:457.50px;top:78.00px;font-size:22px;letter-spacing:0.619px;color:#fff;">Last Name</div>
<div class="t" style="left:794.60px;top:78.00px;font-size:22px;letter-spacing:0.737px;color:#000;">contains</div>
<div class="t" style="left:1130.70px;top:78.00px;font-size:22px;letter-spacing:0.766px;color:#000;">austin</div>
<div class="t" style="left:1556.30px;top:74.00px;font-size:22px;letter-spacing:0.546px;color:#000;">Find</div>
<div class="t" style="left:1664.90px;top:74.00px;font-size:22px;letter-spacing:0.656px;color:#000;">Advanced Find</div>
<div class="t" style="left:228.00px;top:131.50px;font-size:22px;letter-spacing:0.746px;color:#000;font-weight:bold;">Last Name</div>
<div class="t" style="left:929.00px;top:131.50px;font-size:22px;letter-spacing:0.719px;color:#000;font-weight:bold;">Salutation Name</div>
<div class="t" style="left:1561.70px;top:131.50px;font-size:22px;letter-spacing:0.655px;color:#000;font-weight:bold;">Primary Phone</div>
<div class="t" style="left:229.00px;top:172.20px;font-size:22px;letter-spacing:0.758px;color:#000;">Austin</div>
<div class="t" style="left:929.00px;top:172.20px;font-size:22px;letter-spacing:0.310px;color:#000;">Janie</div>
<div class="t" style="left:270.20px;top:359.80px;font-size:26px;letter-spacing:0.420px;color:#000;">Janie Austin</div>
<div class="t" style="left:1753.20px;top:363.70px;font-size:22px;letter-spacing:0.172px;color:#000;">1 Result</div>
<div class="t" style="left:415.60px;top:408.00px;font-size:22px;letter-spacing:-0.184px;color:#000;">Address</div>
<div class="t" style="left:580.20px;top:408.00px;font-size:22px;letter-spacing:-0.123px;color:#000;">Phones</div>
<div class="t" style="left:740.10px;top:408.00px;font-size:22px;letter-spacing:0.119px;color:#000;">Email</div>
<div class="t" style="left:880.10px;top:408.00px;font-size:22px;letter-spacing:-0.098px;color:#000;">Photos</div>
<div class="t" style="left:1033.50px;top:408.00px;font-size:22px;letter-spacing:-0.109px;color:#000;">Groups</div>
<div class="t" style="left:1190.40px;top:408.00px;font-size:22px;letter-spacing:-0.045px;color:#000;">User Fields</div>
<div class="t" style="left:1386.60px;top:408.00px;font-size:22px;letter-spacing:-0.018px;color:#000;">Giving Units</div>
<div class="t" style="left:1590.80px;top:408.00px;font-size:22px;letter-spacing:-0.015px;color:#000;">Visitation</div>
<div class="t" style="left:333.50px;top:482.20px;font-size:22px;letter-spacing:0.682px;color:#2a2a2a;">Family Name Information</div>
<div class="t" style="left:386.40px;top:524.00px;font-size:22px;letter-spacing:0.580px;color:#000;">Last Name:</div>
<div class="t" style="left:356.20px;top:564.00px;font-size:22px;letter-spacing:0.609px;color:#000;">Mailing Name:</div>
<div class="t" style="left:326.10px;top:604.00px;font-size:22px;letter-spacing:0.617px;color:#000;">Salutation Name:</div>
<div class="t" style="left:374.30px;top:644.00px;font-size:22px;letter-spacing:0.507px;color:#000;">Label Name:</div>
<div class="t" style="left:520.70px;top:524.00px;font-size:22px;letter-spacing:0.758px;color:#000;">Austin</div>
<div class="t" style="left:520.70px;top:564.00px;font-size:22px;letter-spacing:0.310px;color:#000;">Janie</div>
<div class="t" style="left:520.70px;top:604.00px;font-size:22px;letter-spacing:0.310px;color:#000;">Janie</div>
<div class="t" style="left:520.70px;top:644.00px;font-size:22px;letter-spacing:0.608px;color:#000;">Janie Austin</div>
<div class="t" style="left:787.60px;top:524.00px;font-size:22px;letter-spacing:1.163px;color:#000;">Suffix:</div>
<div class="t" style="left:863.00px;top:564.00px;font-size:22px;letter-spacing:1.117px;color:#000;">ID: 549</div>
<div class="t" style="left:1001.90px;top:493.80px;font-size:22px;letter-spacing:0.848px;color:#000;">Order</div>
<div class="t" style="left:1119.90px;top:493.80px;font-size:22px;letter-spacing:0.564px;color:#000;">First Name</div>
<div class="t" style="left:1298.20px;top:493.80px;font-size:22px;letter-spacing:0.494px;color:#000;">Last Name</div>
<div class="t" style="left:1522.00px;top:493.80px;font-size:22px;letter-spacing:0.504px;color:#000;">Family Status</div>
<div class="t" style="left:1092.80px;top:533.40px;font-size:22px;letter-spacing:0.310px;color:#7f7f7f;">Janie</div>
<div class="t" style="left:1270.70px;top:533.40px;font-size:22px;letter-spacing:0.758px;color:#7f7f7f;">Austin</div>
<div class="t" style="left:831.70px;top:708.20px;font-size:22px;letter-spacing:0.629px;color:#000;">Primary Address</div>
<div class="t" style="left:1046.80px;top:708.20px;font-size:22px;letter-spacing:0.708px;color:#000;">Alternate Address</div>
<div class="t" style="left:427.20px;top:756.00px;font-size:22px;letter-spacing:0.585px;color:#000;">Address:</div>
<div class="t" style="left:533.70px;top:756.00px;font-size:22px;letter-spacing:0.921px;color:#000;">234 Main St</div>
<div class="t" style="left:469.80px;top:876.00px;font-size:22px;letter-spacing:1.078px;color:#000;">City:</div>
<div class="t" style="left:533.70px;top:876.00px;font-size:22px;letter-spacing:0.715px;color:#000;">Big City</div>
<div class="t" style="left:428.00px;top:916.00px;font-size:22px;letter-spacing:0.995px;color:#000;">Country:</div>
<div class="t" style="left:533.70px;top:916.00px;font-size:22px;letter-spacing:-0.288px;color:#000;">US</div>
<div class="t" style="left:857.80px;top:876.00px;font-size:22px;letter-spacing:0.692px;color:#000;">State</div>
<div class="t" style="left:925.70px;top:876.00px;font-size:22px;letter-spacing:-1.474px;color:#000;">KY</div>
<div class="t" style="left:1002.70px;top:876.00px;font-size:22px;letter-spacing:0.637px;color:#000;">Zip</div>
<div class="t" style="left:1055.00px;top:876.00px;font-size:22px;letter-spacing:1.840px;color:#000;">45689</div>
<div class="t" style="left:993.60px;top:916.00px;font-size:22px;letter-spacing:0.843px;color:#000;">Carrier Sort:</div>
<div class="t" style="left:565.90px;top:953.50px;font-size:22px;letter-spacing:1.077px;color:#828282;">Certified</div>
<div class="t" style="left:1072.00px;top:958.10px;font-size:22px;letter-spacing:0.674px;color:#000;">MapQuest</div>
<div class="t" style="left:1419.90px;top:747.90px;font-size:22px;letter-spacing:0.694px;color:#000;">Mailing Code</div>
<div class="t" style="left:1427.40px;top:821.50px;font-size:22px;letter-spacing:0.499px;color:#000;">Care Group</div>
<div class="t" style="left:1283.60px;top:939.60px;font-size:22px;letter-spacing:1.049px;color:#828282;">Directory</div>
<div class="t" style="left:1550.10px;top:939.80px;font-size:22px;letter-spacing:0.978px;color:#828282;">Newsletter</div>
</div>
</div>
</body></html>
